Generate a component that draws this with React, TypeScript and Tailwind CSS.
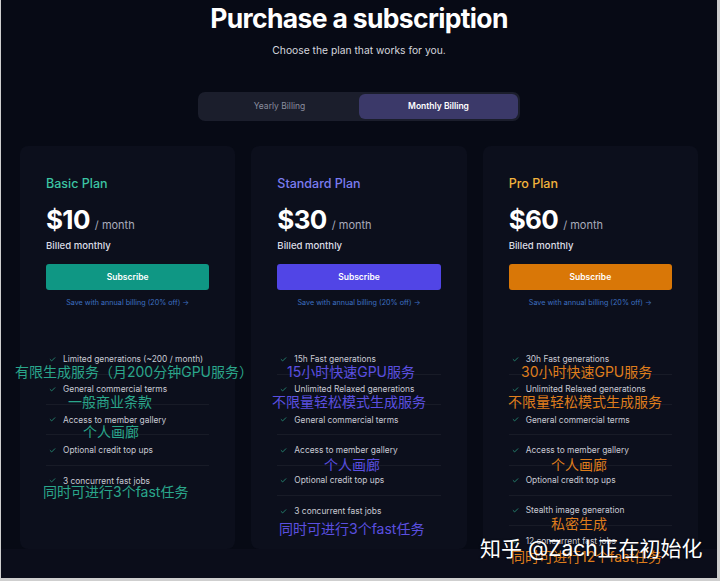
import React from "react";
import { Check } from "lucide-react";

type Plan = {
  name: string;
  price: string;
  titleColor: string;
  buttonColor: string;
  features: string[];
};

const plans: Plan[] = [
  {
    name: "Basic Plan",
    price: "$10",
    titleColor: "text-[#3cc4a2]",
    buttonColor: "bg-[#0f9784]",
    features: [
      "Limited generations (~200 / month)",
      "General commercial terms",
      "Access to member gallery",
      "Optional credit top ups",
      "3 concurrent fast jobs",
    ],
  },
  {
    name: "Standard Plan",
    price: "$30",
    titleColor: "text-[#7b7cf0]",
    buttonColor: "bg-[#5145e6]",
    features: [
      "15h Fast generations",
      "Unlimited Relaxed generations",
      "General commercial terms",
      "Access to member gallery",
      "Optional credit top ups",
      "3 concurrent fast jobs",
    ],
  },
  {
    name: "Pro Plan",
    price: "$60",
    titleColor: "text-[#f2b33d]",
    buttonColor: "bg-[#d97707]",
    features: [
      "30h Fast generations",
      "Unlimited Relaxed generations",
      "General commercial terms",
      "Access to member gallery",
      "Optional credit top ups",
      "Stealth image generation",
      "12 concurrent fast jobs",
    ],
  },
];

// 截图上叠加的中文注释
const notes = [
  { text: "有限生成服务（月200分钟GPU服务）", left: 14, top: 362, color: "text-[#2aa68b]" },
  { text: "一般商业条款", left: 67, top: 392, color: "text-[#2aa68b]" },
  { text: "个人画廊", left: 82, top: 422, color: "text-[#2aa68b]" },
  { text: "同时可进行3个fast任务", left: 42, top: 482, color: "text-[#2aa68b]" },
  { text: "15小时快速GPU服务", left: 286, top: 362, color: "text-[#5b4fe0]" },
  { text: "不限量轻松模式生成服务", left: 271, top: 392, color: "text-[#5b4fe0]" },
  { text: "个人画廊", left: 323, top: 455, color: "text-[#5b4fe0]" },
  { text: "同时可进行3个fast任务", left: 278, top: 519, color: "text-[#5b4fe0]" },
  { text: "30小时快速GPU服务", left: 520, top: 362, color: "text-[#df7d1c]" },
  { text: "不限量轻松模式生成服务", left: 507, top: 392, color: "text-[#df7d1c]" },
  { text: "个人画廊", left: 550, top: 455, color: "text-[#df7d1c]" },
  { text: "私密生成", left: 550, top: 514, color: "text-[#df7d1c]" },
  { text: "同时可进行12个fast任务", left: 510, top: 547, color: "text-[#df7d1c]" },
];

const PlanCard = ({ plan }: { plan: Plan }) => {
  return (
    <div className="flex-1 h-[403px] bg-[#0c0f1c] rounded-lg px-[26px] pt-[32px]">
      <div className={`text-[12.5px] font-medium leading-none ${plan.titleColor}`}>{plan.name}</div>
      <div className="flex items-baseline gap-[5px] mt-[17px]">
        <span className="text-[26px] font-bold text-white leading-none tracking-tight">{plan.price}</span>
        <span className="text-[11px] text-[#a9abbb]">/ month</span>
      </div>
      <div className="text-[9.6px] font-medium text-[#dcdde6] mt-[7px] leading-none">Billed monthly</div>
      <button
        className={`mt-[14px] w-full h-[26px] rounded-[3px] text-[8.5px] font-semibold text-white ${plan.buttonColor}`}
      >
        Subscribe
      </button>
      <div className="text-center text-[7.2px] text-[#3d6fc2] mt-[9px] leading-none">
        Save with annual billing (20% off) →
      </div>
      <ul className="mt-[38px]">
        {plan.features.map((f) => (
          <li
            key={f}
            className="h-[30.3px] flex items-center gap-[7px] pl-[3px] border-b border-white/[0.05] last:border-b-0"
          >
            <Check size={7} strokeWidth={2.5} className="text-[#2ea88a]" />
            <span className="text-[8.4px] text-[#c9cad4]">{f}</span>
          </li>
        ))}
      </ul>
    </div>
  );
};

export default function App() {
  return (
    <div
      className="w-[720px] h-[581px] bg-[#cfcfcf] overflow-hidden"
      style={{ fontFamily: "Inter, 'Noto Sans CJK SC', sans-serif" }}
    >
      <div className="relative ml-[1px] w-[716px] h-[578px] bg-[#0b0d1a] overflow-hidden">
        <div className="bg-[#070a15] pb-[30px]">
          <h1 className="text-center text-[26.5px] font-bold text-white leading-none pt-[5px] tracking-tight">
            Purchase a subscription
          </h1>
          <p className="text-center text-[10.3px] text-[#d5d6de] mt-[13px] leading-none">
            Choose the plan that works for you.
          </p>
          <div className="flex justify-center mt-[37px]">
            <div className="flex w-[322px] h-[29px] bg-[#1b1e2c] rounded-[7px] p-[2px]">
              <div className="flex-1 flex items-center justify-center text-[8.5px] text-[#8a8d9e]">
                Yearly Billing
              </div>
              <div className="flex-1 flex items-center justify-center text-[8.5px] font-semibold text-white bg-[#3b3969] rounded-[6px]">
                Monthly Billing
              </div>
            </div>
          </div>
          <div className="flex gap-[16px] px-[19px] mt-[25px] -mb-[30px]">
            {plans.map((p) => (
              <PlanCard key={p.name} plan={p} />
            ))}
          </div>
        </div>

        {notes.map((n, i) => (
          <div
            key={i}
            className={`absolute text-[14px] leading-[20px] whitespace-nowrap ${n.color}`}
            style={{ left: n.left, top: n.top }}
          >
            {n.text}
          </div>
        ))}

        <div
          className="absolute left-[479px] top-[535px] text-[21px] leading-[28px] text-white whitespace-nowrap"
          style={{ textShadow: "0 0 2px rgba(0,0,0,0.6)" }}
        >
          知乎 @Zach正在初始化
        </div>
      </div>
    </div>
  );
}
